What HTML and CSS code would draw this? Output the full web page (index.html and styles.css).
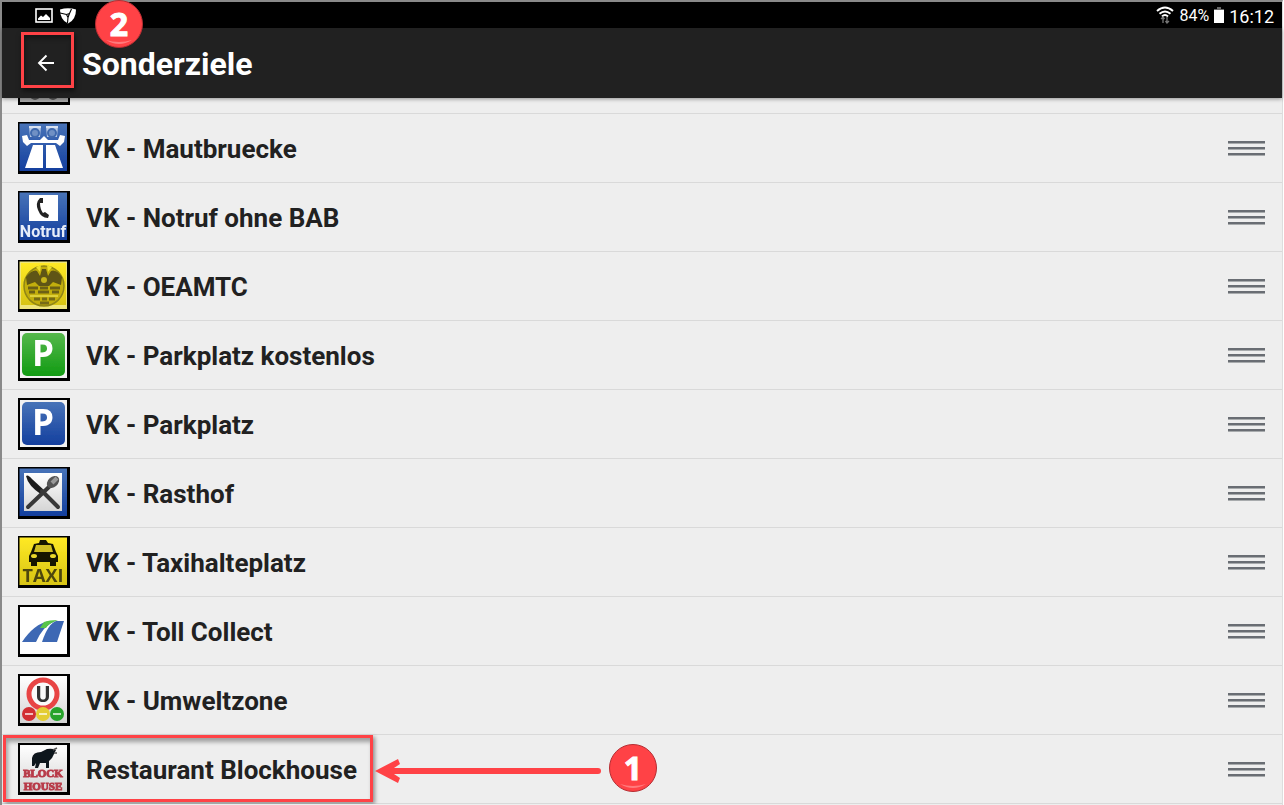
FILE: index.html
```html
<!DOCTYPE html>
<html lang="de">
<head>
<meta charset="utf-8">
<title>Sonderziele</title>
<link rel="stylesheet" href="styles.css">
</head>
<body>
<div class="screen">
  <div class="status-bar">
    <div class="status-group status-left">
      <svg width="18" height="16" viewBox="0 0 18 16"><rect x="1" y="1" width="16" height="13" fill="none" stroke="#fff" stroke-width="1.6"/><path d="M3 12V10.500L6 7.500L8 9L11 6L15 10V12Z" fill="#fff"/></svg>
      <svg width="18" height="16" viewBox="0 0 18 16"><path d="M1 1.500Q9-.8 17 1.500Q17 12 9 15.500Q1 12 1 1.500Z" fill="#fff"/><path d="M1 5L7.500 6.500L10.500 5.500L12.500 1M7.500 6.500L9 9.500L8.500 15M10.500 5.500L9 9.500" fill="none" stroke="#000" stroke-width="1.100"/></svg>
    </div>
    <div class="status-group status-right">
      <svg width="18" height="18" viewBox="0 0 18 18" fill="none" stroke="#fff" stroke-width="1.900"><path d="M1 5Q9-2 17 5M3.500 7.800Q9 3 14.500 7.800M6 10.500Q9 7.500 12 10.500"/><path d="M7 17V11M5 13L7 11L8.500 13M11 11V17M9.500 15L11 17L13 15" stroke="#777" stroke-width="1.300"/></svg>
      <span class="battery-text">84%</span>
      <svg width="10" height="16" viewBox="0 0 10 16"><path d="M3 0H7V2H10V4H0V2H3Z" fill="#666"/><path d="M0 3H10V16H0Z" fill="#fff"/></svg>
      <span class="clock">16:12</span>
    </div>
  </div>
  <header class="app-bar">
    <button class="back" aria-label="Zurück"><svg width="18" height="18" viewBox="0 0 18 18" fill="none" stroke="#fff" stroke-width="1.900"><path d="M17 9H2M9.500 1.500L2 9L9.500 16.500"/></svg></button>
    <h1 class="title">Sonderziele</h1>
    <span class="badge badge-two"><svg width="48" height="48" viewBox="0 0 48 48"><circle cx="24" cy="24" r="23.500" fill="#ff4246" stroke="#b52e33"/><path d="M11 40Q24 48 37 40Q24 44 11 40Z" fill="#ff7b7d"/></svg><b class="badge-number">2</b></span>
  </header>
  <ul class="list">
    <li class="row">
      <svg class="icon" viewBox="0 0 52 52"><rect width="52" height="52" fill="#000"/><rect x="2" y="2" width="48" height="47" fill="#aaa"/><circle cx="17" cy="42" r="5" fill="#555"/><circle cx="35" cy="42" r="5" fill="#555"/></svg>
    </li>
    <li class="row">
      <svg class="icon" viewBox="0 0 52 52"><defs><linearGradient id="blue" x2="0" y2="1"><stop stop-color="#4773b8"/><stop offset="1" stop-color="#143f9e"/></linearGradient><linearGradient id="green" x2="0" y2="1"><stop stop-color="#55b84b"/><stop offset="1" stop-color="#119b13"/></linearGradient><linearGradient id="yellow" x2="0" y2="1"><stop stop-color="#ffe925"/><stop offset="1" stop-color="#d7c413"/></linearGradient><linearGradient id="silver" x2="0" y2="1"><stop stop-color="#fff"/><stop offset="1" stop-color="#d5d5d5"/></linearGradient><filter id="soft"><feGaussianBlur stdDeviation=".7"/></filter></defs>
        <rect width="52" height="52" fill="#000"/><rect x="1.500" y="1.500" width="47.500" height="47.500" fill="url(#blue)" filter="url(#soft)"/>
        <g filter="url(#soft)"><path d="M4 14L9 13L11 18H22L26 14L30 18H40L42 13L47 14L46 20L42 24L38 21H13L9 24L5 20Z" fill="#fff"/><path d="M15 23H25V46H7Z M28 23H37L45 46H28Z" fill="#fff"/><path d="M11 4H23L22 15H12Z M28 4H40L39 15H29Z" fill="#b9cae6"/><circle cx="17" cy="11" r="4" fill="#7090c4" stroke="#3f69ad" stroke-width="2"/><circle cx="34" cy="11" r="4" fill="#7090c4" stroke="#3f69ad" stroke-width="2"/><path d="M11 5H23M28 5H40" stroke="#d8e2f2" stroke-width="2"/></g></svg>
      <span class="label">VK - Mautbruecke</span><button class="handle" aria-label="Verschieben"><i></i><i></i><i></i></button>
    </li>
    <li class="row">
      <svg class="icon" viewBox="0 0 52 52"><rect width="52" height="52" fill="#000"/><rect x="1.500" y="1.500" width="47.500" height="47.500" fill="url(#blue)" filter="url(#soft)"/><g filter="url(#soft)"><rect x="11" y="4" width="29" height="26" fill="#fff"/><path d="M22 7Q17 12 20 19Q23 27 30 27L31 24L27 21L25 22Q22 18 22 12L25 12L25 7Z" fill="#222"/><text class="notruf" x="25" y="46" text-anchor="middle">Notruf</text></g></svg>
      <span class="label">VK - Notruf ohne BAB</span><button class="handle" aria-label="Verschieben"><i></i><i></i><i></i></button>
    </li>
    <li class="row">
      <svg class="icon" viewBox="0 0 52 52"><rect width="52" height="52" fill="#000"/><rect x="1.500" y="1.500" width="47.500" height="47.500" fill="#eee57b" filter="url(#soft)"/><rect x="3" y="3" width="45" height="42" fill="url(#yellow)"/><g filter="url(#soft)"><circle cx="26" cy="26" r="20" fill="#c2ae0b" stroke="#8f8514" stroke-width="1.500"/><path d="M8 17Q15 9 19 11L22 16L24 9H28L30 16L33 11Q38 9 44 17L43 25L35 22L31 26H21L17 22L9 25Z" fill="#5f5412"/><circle cx="26" cy="20" r="3" fill="#c7b51a"/><path d="M18 7L23 5L22 12Z M29 5L34 7L30 12Z" fill="#eee22f"/><path d="M10 28H20M22 28H30M32 28H42M11 32H17M20 32H31M34 32H41" stroke="#6c6012" stroke-width="3"/><path d="M12 36H40" stroke="#ded03a" stroke-width="2"/><path d="M16 39H22M24 39H29M31 39H37M22 43H31" stroke="#756b18" stroke-width="3"/></g></svg>
      <span class="label">VK - OEAMTC</span><button class="handle" aria-label="Verschieben"><i></i><i></i><i></i></button>
    </li>
    <li class="row">
      <svg class="icon" viewBox="0 0 52 52"><rect width="52" height="52" fill="#000"/><g filter="url(#soft)"><rect x="2" y="2" width="47" height="47" fill="#f2f2f2"/><rect x="4" y="4" width="43" height="43" rx="5" fill="url(#green)"/><text class="parking" x="25" y="37" text-anchor="middle">P</text></g></svg>
      <span class="label">VK - Parkplatz kostenlos</span><button class="handle" aria-label="Verschieben"><i></i><i></i><i></i></button>
    </li>
    <li class="row">
      <svg class="icon" viewBox="0 0 52 52"><rect width="52" height="52" fill="#000"/><g filter="url(#soft)"><rect x="2" y="2" width="47" height="47" fill="#f2f2f2"/><rect x="4" y="4" width="43" height="43" rx="5" fill="url(#blue)"/><text class="parking" x="25" y="37" text-anchor="middle">P</text></g></svg>
      <span class="label">VK - Parkplatz</span><button class="handle" aria-label="Verschieben"><i></i><i></i><i></i></button>
    </li>
    <li class="row">
      <svg class="icon" viewBox="0 0 52 52"><rect width="52" height="52" fill="#000"/><rect x="1.500" y="1.500" width="47.500" height="47.500" fill="url(#blue)" filter="url(#soft)"/><g filter="url(#soft)"><rect x="6" y="6" width="38" height="38" fill="url(#silver)"/><path d="M8 9Q10 7 14 12L27 24L24 28Q10 19 8 9Z" fill="#1e1e1e"/><path d="M24 24L40 40M10 40L32 19" stroke="#383838" stroke-width="4" stroke-linecap="round"/><ellipse cx="35" cy="15" rx="7" ry="5" transform="rotate(-42 35 15)" fill="#555"/><path d="M34 16L39 11" stroke="#999" stroke-width="4"/></g></svg>
      <span class="label">VK - Rasthof</span><button class="handle" aria-label="Verschieben"><i></i><i></i><i></i></button>
    </li>
    <li class="row">
      <svg class="icon" viewBox="0 0 52 52"><rect width="52" height="52" fill="#000"/><rect x="1.500" y="1.500" width="47.500" height="47.500" fill="url(#yellow)" filter="url(#soft)"/><g filter="url(#soft)"><path d="M21 7L22 4H28L30 7L35 8L38 16L40 20V26H38V30H32V26H19V30H13V26H11V20L13 16L16 8Z" fill="#151506"/><path d="M18 9H33L35 16H16Z" fill="#cfbe22"/><ellipse cx="16" cy="20" rx="3" ry="2" fill="#e8d72b"/><ellipse cx="35" cy="20" rx="3" ry="2" fill="#e8d72b"/><text class="taxi" x="25" y="46" text-anchor="middle">TAXI</text></g></svg>
      <span class="label">VK - Taxihalteplatz</span><button class="handle" aria-label="Verschieben"><i></i><i></i><i></i></button>
    </li>
    <li class="row">
      <svg class="icon" viewBox="0 0 52 52"><rect width="52" height="52" fill="#000"/><g filter="url(#soft)"><rect x="2" y="2" width="47" height="47" fill="#fff"/><path d="M4 37Q16 19 31 16H37Q25 21 18 37Z" fill="#3c68b4"/><path d="M24 37Q30 19 38 16H46L39 37Z" fill="#3c68b4"/><path d="M22 23L26 17Q31 15 40 15Q31 18 28 23Z" fill="#59c548"/></g></svg>
      <span class="label">VK - Toll Collect</span><button class="handle" aria-label="Verschieben"><i></i><i></i><i></i></button>
    </li>
    <li class="row">
      <svg class="icon" viewBox="0 0 52 52"><rect width="52" height="52" fill="#000"/><g filter="url(#soft)"><rect x="2" y="2" width="47" height="47" fill="url(#silver)"/><circle cx="25" cy="20" r="14" fill="#fafafa" stroke="#e84444" stroke-width="5"/><text class="zone" x="25" y="28" text-anchor="middle">U</text><circle cx="11" cy="40" r="7" fill="#d22d30"/><circle cx="25" cy="40" r="7" fill="#e4cd30"/><circle cx="39" cy="40" r="7" fill="#25a32b"/><path d="M7 40H15M21 40H29M35 40H43" stroke="#ffffffb0" stroke-width="2"/></g></svg>
      <span class="label">VK - Umweltzone</span><button class="handle" aria-label="Verschieben"><i></i><i></i><i></i></button>
    </li>
    <li class="row">
      <svg class="icon" viewBox="0 0 52 52"><rect width="52" height="52" fill="#000"/><g filter="url(#soft)"><rect x="2" y="2" width="47" height="47" fill="url(#silver)"/><path d="M14 15Q15 9 23 9L29 6Q34 5 38 7L36 11L34 15L31 18V25H28V20H22L20 25H17L18 20L16 23H14Z" fill="#10141b"/><path d="M35 7L39 5M36 10L39 10" stroke="#555" stroke-width="1.500"/><text class="block" x="25" y="34" text-anchor="middle">BLOCK</text><text class="block" x="25" y="47" text-anchor="middle">HOUSE</text></g></svg>
      <span class="label">Restaurant Blockhouse</span><button class="handle" aria-label="Verschieben"><i></i><i></i><i></i></button>
      <span class="marker"></span>
      <svg class="arrow" width="228" height="26" viewBox="0 0 228 26"><path d="M18 13H223" stroke="#ff4246" stroke-width="6" stroke-linecap="round"/><path d="M0 13L23 1L25 6L19 10V16L25 20L23 25Z" fill="#ff4246"/></svg>
      <span class="badge badge-one"><svg width="48" height="48" viewBox="0 0 48 48"><circle cx="24" cy="24" r="23.500" fill="#ff4246" stroke="#b52e33"/><path d="M11 40Q24 48 37 40Q24 44 11 40Z" fill="#ff7b7d"/></svg><b class="badge-number">1</b></span>
    </li>
  </ul>
</div>
</body>
</html>
```
FILE: styles.css
```css
* { box-sizing: border-box; }
body {
  margin: 0;
  font-family: Roboto, "Liberation Sans", sans-serif;
  color: #212121;
  background: #fff;
}
.screen {
  display: flex;
  flex-direction: column;
  height: 100vh;
  margin-right: 1px;
  padding-bottom: 1px;
  border: solid #8a8a8a;
  border-width: 2px 0 0 2px;
  border-right: 1px solid #ddd;
  background: #eee;
}
.status-bar {
  display: flex;
  flex: none;
  justify-content: space-between;
  height: 26px;
  padding: 0 8px 0 33px;
  background: #000;
  color: #fff;
}
.status-group { display: flex; align-items: center; }
.status-left { gap: 6px; padding-top: 2px; }
.status-right { gap: 5px; }
.battery-text { font-size: 16px; }
.clock { font-size: 18px; line-height: 26px; padding-top: 3px; }
.app-bar {
  position: relative;
  z-index: 1;
  display: flex;
  flex: none;
  align-items: center;
  gap: 8px;
  height: 70px;
  padding: 0 19px;
  background: #212121;
  box-shadow: 0 1px 4px #0006;
}
.back {
  display: flex;
  align-items: center;
  justify-content: center;
  width: 53px;
  height: 56px;
  margin-bottom: 6px;
  padding: 6px 3px 0 0;
  border: 3px solid #ff4246;
  background: none;
  box-shadow: 1px 3px 5px #0008, inset 1px 3px 5px #0006;
}
.title { margin: 0; padding-top: 2px; color: #fff; font-size: 32px; font-weight: 700; }
.list {
  display: flex;
  flex: 1;
  flex-direction: column;
  justify-content: flex-end;
  min-height: 0;
  margin: 0;
  padding: 0;
  overflow: hidden;
  list-style: none;
}
.row {
  position: relative;
  display: flex;
  flex: none;
  align-items: center;
  gap: 16px;
  padding: 8px 17px 8px 16px;
  border-bottom: 1px solid #d9d9d9;
}
.icon { flex: none; width: 52px; height: 52px; }
.label { flex: 1; padding-top: 2px; font-size: 26px; font-weight: 700; line-height: 32px; }
.handle {
  display: flex;
  flex-direction: column;
  gap: 3px;
  width: 37px;
  padding: 0;
  border: 0;
  background: none;
}
.handle i { height: 3px; border-bottom: 1px solid #a8abad; background: #696d73; }
.notruf { fill: #e6edf9; font: 700 16px Roboto, sans-serif; }
.parking { fill: #fff; font: 700 35px "Open Sans", sans-serif; }
.taxi { fill: #4d470c; font: 700 18px "Open Sans", sans-serif; }
.zone { fill: #333; font: 700 22px Roboto, sans-serif; }
.block { fill: #b83b49; stroke: #b83b49; font: 700 11px "Liberation Serif", serif; }
.marker {
  position: absolute;
  top: 0;
  left: 1px;
  width: 370px;
  height: 67px;
  border: 3px solid #ff4246;
  box-shadow: 2px 2px 4px #0006, inset 2px 4px 4px #0005;
}
.arrow { position: absolute; top: 23px; left: 373px; }
.badge { position: absolute; width: 48px; height: 48px; }
.badge svg { display: block; }
.badge-number {
  position: absolute;
  inset: 0;
  color: #fff;
  font: 700 32px/48px "Noto Sans", sans-serif;
  text-align: center;
  -webkit-text-stroke: 1px #fff;
}
.badge-one { top: 9px; left: 607px; }
.badge-two { top: -28px; left: 93px; }
```
